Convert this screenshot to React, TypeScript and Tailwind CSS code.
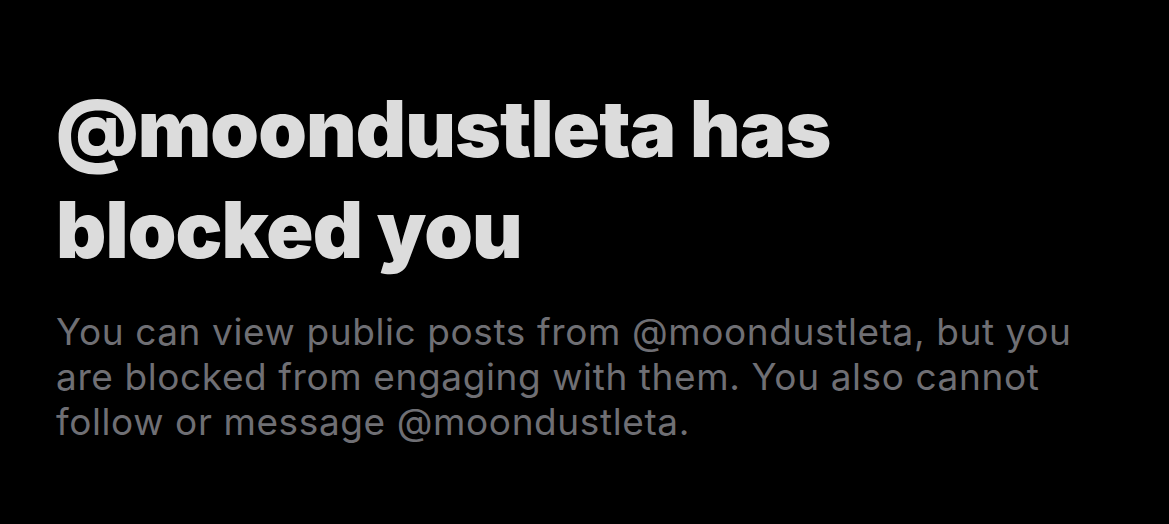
export default function App() {
  return (
    <div className="w-[1169px] h-[524px] bg-black overflow-hidden font-['Inter',sans-serif]">
      <div className="pl-[56px] pr-6 pt-[78px]">
        <h1 className="text-[78px] leading-[101px] font-black text-[#dcdcdc] tracking-[-0.9px] max-w-[1000px]">
          @moondustleta has blocked you
        </h1>
        <p className="mt-[29px] text-[37px] leading-[45px] tracking-[0.6px] text-[#6f6f74] max-w-[1040px]">
          You can view public posts from @moondustleta, but you are blocked from engaging with them. You also cannot follow or message @moondustleta.
        </p>
      </div>
    </div>
  );
}
